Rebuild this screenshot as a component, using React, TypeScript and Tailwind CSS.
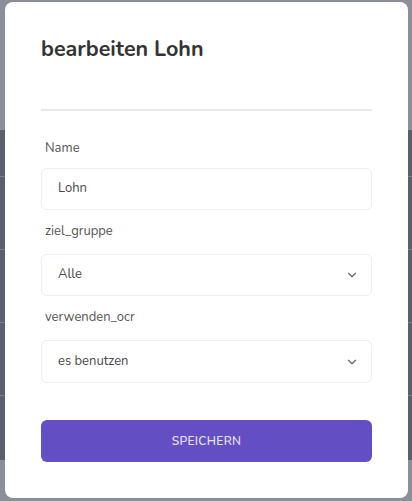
import { ChevronDown } from "lucide-react";

const font = { fontFamily: "Nunito, Lato, 'Open Sans', sans-serif" };

function Field({ label, children }: { label: string; children: React.ReactNode }) {
  return (
    <div>
      <p className="ml-1 text-[13px] leading-5 text-[#555]">{label}</p>
      {children}
    </div>
  );
}

function SelectBox({ value, className }: { value: string; className?: string }) {
  return (
    <div
      className={`flex h-[42px] items-center justify-between rounded-md border border-[#eeeeee] bg-white pl-4 pr-3 ${className ?? ""}`}
    >
      <span className="text-[13px] text-[#4a4a4a]">{value}</span>
      <ChevronDown className="h-[14px] w-[14px] text-[#666]" strokeWidth={2} />
    </div>
  );
}

export default function App() {
  return (
    <div className="relative h-[501px] w-[412px] overflow-hidden" style={font}>
      {/* page behind the backdrop */}
      <div className="flex h-full flex-col">
        <div className="h-[130px] bg-[#8c8f98]" />
        <div className="flex h-[330px] flex-col bg-[#5a5f6b]">
          <div className="h-[46px]" />
          <div className="h-[73px] border-t border-[#7b808a]" />
          <div className="h-[73px] border-t border-[#7b808a]" />
          <div className="h-[73px] border-t border-[#7b808a]" />
          <div className="flex-1 border-t border-[#7b808a]" />
        </div>
        <div className="flex-1 bg-[#8c8f98]" />
      </div>

      {/* dialog */}
      <div className="absolute left-[5px] top-[2px] h-[496px] w-[403px] rounded-lg bg-white px-9 pt-[33px]">
        <h2 className="text-[21.5px] font-bold leading-7 text-[#333]">bearbeiten Lohn</h2>
        <div className="mt-[46px] h-[2px] bg-[#e8e8e8]" />

        <div className="mt-[27px] flex flex-col">
          <Field label="Name">
            <div className="mt-[10px] flex h-[42px] items-center rounded-md border border-[#eeeeee] pl-4">
              <span className="text-[13px] text-[#4a4a4a]">Lohn</span>
            </div>
          </Field>
          <div className="mt-[11px]">
            <Field label="ziel_gruppe">
              <SelectBox value="Alle" className="mt-[13px]" />
            </Field>
          </div>
          <div className="mt-[11px]">
            <Field label="verwenden_ocr">
              <SelectBox value="es benutzen" className="mt-[13px] h-[43px]" />
            </Field>
          </div>
        </div>

        <button className="mt-[37px] flex h-[42px] w-full items-center justify-center rounded-md bg-[#634fc3] text-[12px] font-semibold tracking-wide text-[#e4dffc]">
          SPEICHERN
        </button>
      </div>
    </div>
  );
}
